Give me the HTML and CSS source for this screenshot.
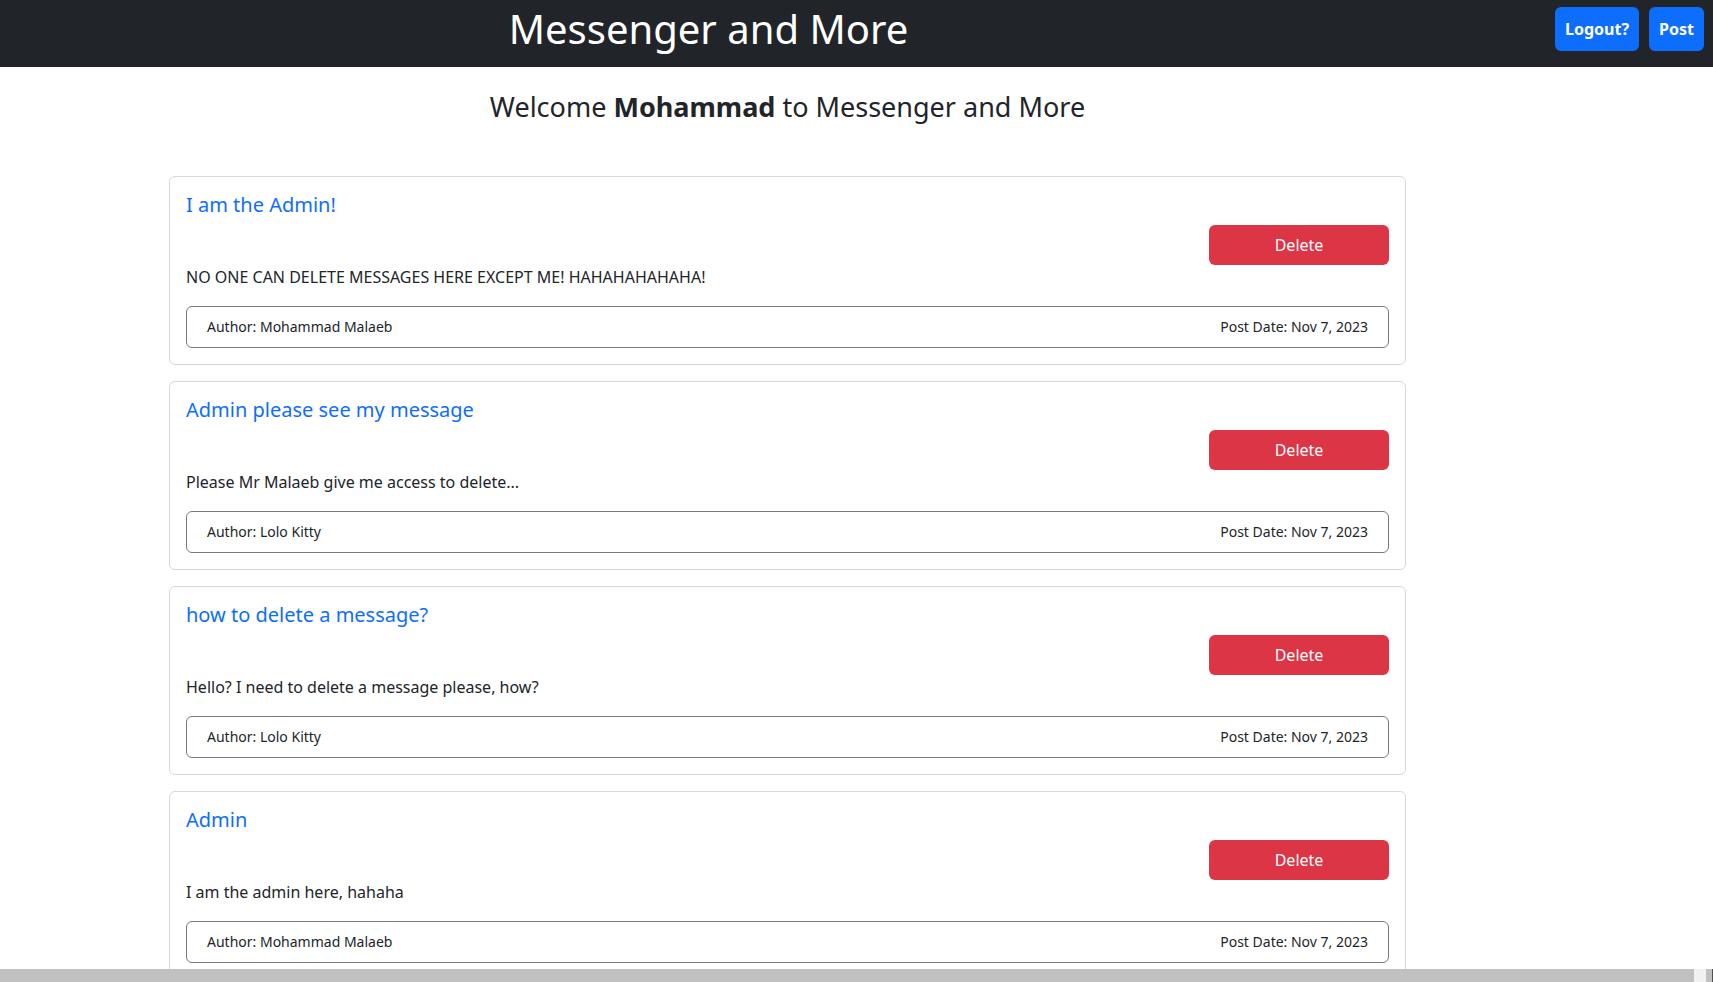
FILE: index.html
```html
<!DOCTYPE html>
<html lang="en">
<head>
<meta charset="utf-8">
<title>Messenger and More</title>
<link rel="stylesheet" href="styles.css">
</head>
<body>
<nav class="topbar">
  <div class="brand-wrap"><h1 class="brand">Messenger and More</h1></div>
  <div class="nav-actions">
    <button class="btn btn-primary">Logout?</button>
    <button class="btn btn-primary">Post</button>
  </div>
</nav>
<main class="column">
  <h3 class="welcome">Welcome <strong>Mohammad</strong> to Messenger and More</h3>
  <div class="feed">
    <article class="card">
      <h5 class="card-title">I am the Admin!</h5>
      <div class="card-actions"><button class="btn btn-danger">Delete</button></div>
      <p class="card-text">NO ONE CAN DELETE MESSAGES HERE EXCEPT ME! HAHAHAHAHAHA!</p>
      <div class="card-meta"><span>Author: Mohammad Malaeb</span><span>Post Date: Nov 7, 2023</span></div>
    </article>
    <article class="card">
      <h5 class="card-title">Admin please see my message</h5>
      <div class="card-actions"><button class="btn btn-danger">Delete</button></div>
      <p class="card-text">Please Mr Malaeb give me access to delete...</p>
      <div class="card-meta"><span>Author: Lolo Kitty</span><span>Post Date: Nov 7, 2023</span></div>
    </article>
    <article class="card">
      <h5 class="card-title">how to delete a message?</h5>
      <div class="card-actions"><button class="btn btn-danger">Delete</button></div>
      <p class="card-text">Hello? I need to delete a message please, how?</p>
      <div class="card-meta"><span>Author: Lolo Kitty</span><span>Post Date: Nov 7, 2023</span></div>
    </article>
    <article class="card">
      <h5 class="card-title">Admin</h5>
      <div class="card-actions"><button class="btn btn-danger">Delete</button></div>
      <p class="card-text">I am the admin here, hahaha</p>
      <div class="card-meta"><span>Author: Mohammad Malaeb</span><span>Post Date: Nov 7, 2023</span></div>
    </article>
  </div>
</main>
<div class="hscroll" aria-hidden="true">
  <div class="hscroll-thumb"></div>
  <div class="hscroll-end"></div>
</div>
</body>
</html>
```

FILE: styles.css
```css
html {
  overflow: hidden;
}
body {
  margin: 0;
  font-family: "Noto Sans", "DejaVu Sans", sans-serif;
  font-size: 16px;
  line-height: 1.5;
  color: #212529;
  background: #fff;
}
.topbar {
  display: flex;
  align-items: flex-start;
  height: 67px;
  background: #212529;
}
.brand-wrap {
  width: 1417px;
  text-align: center;
}
.brand {
  margin: 0;
  padding-top: 5px;
  font-size: 40px;
  line-height: 48px;
  font-weight: 400;
  color: #fff;
}
.nav-actions {
  margin-left: auto;
  margin-right: 9px;
  padding-top: 7px;
  display: flex;
  gap: 10px;
}
.btn {
  font-family: inherit;
  font-size: 16px;
  line-height: 24px;
  border: 0;
  border-radius: 6px;
  color: #fff;
  cursor: pointer;
}
.btn-primary {
  background: #0d6efd;
  font-weight: 700;
  height: 44px;
  padding: 0 10px;
}
.btn-danger {
  background: #dc3545;
  width: 180px;
  height: 40px;
  padding: 0;
}
.column {
  margin-left: 169px;
  width: 1237px;
}
.welcome {
  margin: 23px 0 0;
  text-align: center;
  font-size: 27px;
  line-height: 33px;
  font-weight: 400;
}
.welcome strong {
  font-weight: 700;
}
.feed {
  margin-top: 53px;
  display: flex;
  flex-direction: column;
  gap: 16px;
}
.card {
  box-sizing: border-box;
  border: 1px solid #d8d8d8;
  border-radius: 6px;
  padding: 16px;
}
.card-title {
  margin: 0 0 8px;
  font-size: 20px;
  line-height: 24px;
  font-weight: 400;
  color: #0d6efd;
}
.card-actions {
  display: flex;
  justify-content: flex-end;
}
.card-text {
  margin: 0 0 17px;
}
.card-meta {
  display: flex;
  justify-content: space-between;
  border: 1px solid #7a7a7a;
  border-radius: 6px;
  padding: 8px 20px;
  font-size: 14px;
  line-height: 24px;
}
.hscroll {
  position: fixed;
  left: 0;
  right: 0;
  bottom: 0;
  height: 13px;
  display: flex;
  background: #f1f1f1;
}
.hscroll-thumb {
  width: 1694px;
  background: #c1c1c1;
}
.hscroll-end {
  margin-left: auto;
  width: 7px;
  background: #c1c1c1;
  border-right: 1px solid #505050;
  box-sizing: border-box;
}
```
